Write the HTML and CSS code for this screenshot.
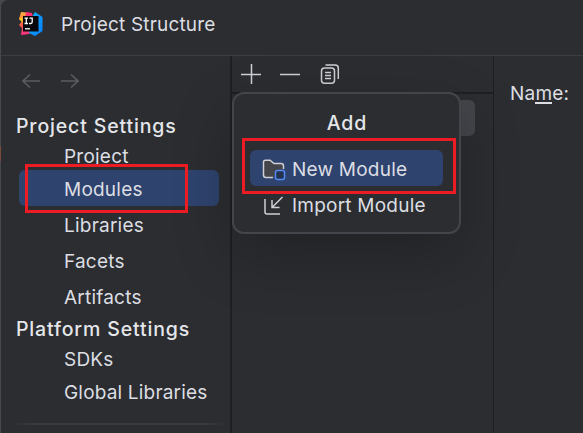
FILE: index.html
```
<!DOCTYPE html>
<html lang="en">
<head>
<meta charset="utf-8">
<title>Project Structure</title>
<link rel="stylesheet" href="styles.css">
</head>
<body>
<div class="window">
  <header class="titlebar">
    <svg class="logo" width="26" height="26" viewBox="0 0 26 26">
      <defs>
        <linearGradient id="warm" x1="0" y1="0" x2="0" y2="1"><stop offset="0" stop-color="#ffb340"/><stop offset=".45" stop-color="#ff6a3d"/><stop offset="1" stop-color="#fe2e86"/></linearGradient>
        <linearGradient id="cool" x1="0" y1="0" x2="1" y2="1"><stop offset="0" stop-color="#12b5f5"/><stop offset="1" stop-color="#087cfa"/></linearGradient>
      </defs>
      <path d="M3 1L12 2L14 20L11 23L3 24L4 17L1 14L4 10L1 8Z" fill="url(#warm)"/>
      <path d="M8 1L14 2L15 7L7 8Z" fill="#fe2e75"/>
      <path d="M17 1L24.500 6L24.500 20L17 25L11 22L14 6Z" fill="url(#cool)"/>
      <path d="M1 8L4 6L5 12Z" fill="#ffcc22"/>
      <rect x="5" y="5" width="15.500" height="15.500" fill="#08070b"/>
      <path d="M6.500 7.200H10M8.300 7.200V12.500M6.500 12.500H10M11.500 7.200H14.200V11Q14.200 12.500 12.800 12.500H11" fill="none" stroke="#fff" stroke-width="1.300"/>
      <path d="M7 17.800H12" stroke="#fff" stroke-width="1.300"/>
    </svg>
    <h1>Project Structure</h1>
  </header>
  <div class="content">
    <nav class="sidebar">
      <div class="history">
        <svg width="18" height="16" viewBox="0 0 18 16"><path d="M18 8H1M8 1.500L1 8L8 14.500"/></svg>
        <svg width="18" height="16" viewBox="0 0 18 16"><path d="M0 8H17M10 1.500L17 8L10 14.500"/></svg>
      </div>
      <h2>Project Settings</h2>
      <ul>
        <li class="short">Project</li>
        <li class="selected">Modules</li>
        <li>Libraries</li>
        <li>Facets</li>
        <li>Artifacts</li>
      </ul>
      <h2 class="platform">Platform Settings</h2>
      <ul>
        <li class="sdks">SDKs</li>
        <li class="global">Global Libraries</li>
      </ul>
      <div class="divider"></div>
      <div class="marker marker-modules"></div>
    </nav>
    <section class="modules">
      <div class="toolbar">
        <svg width="20" height="20" viewBox="0 0 20 20"><path d="M0 10.500H20M10.500 0V20"/></svg>
        <svg width="20" height="20" viewBox="0 0 20 20"><path d="M0 10.500H20"/></svg>
        <svg width="20" height="20" viewBox="0 0 20 20"><rect x="1.500" y="4" width="13" height="15.200" rx="3"/><path d="M5.500 1H15Q18.300 1 18.300 4V15M5 8.500H11M5 11.500H11M5 14.500H11"/></svg>
      </div>
      <div class="list"><div class="list-row"></div></div>
      <div class="popup">
        <h3>Add</h3>
        <div class="action active">
          <svg width="24" height="22" viewBox="0 0 24 22"><path d="M11 18.500H4Q1.500 18.500 1.500 16V3Q1.500 1.200 3.500 1.200H8L12 4.500H19Q21.500 4.500 21.500 7V10" class="folder"/><rect x="13.500" y="11.500" width="9" height="9" rx="2" class="badge"/></svg>
          <span>New Module</span>
        </div>
        <div class="action">
          <svg width="24" height="22" viewBox="0 0 24 22"><path d="M3 4V17Q3 19 5 19H18M20.500 2L10 12.500M10 5V12.500H17.500"/></svg>
          <span>Import Module</span>
        </div>
        <div class="marker marker-new"></div>
      </div>
    </section>
    <main class="details"><label>Na<span>m</span>e:</label></main>
  </div>
</div>
</body>
</html>
```
FILE: styles.css
```
* { box-sizing: border-box; }
body { margin: 0; background: linear-gradient(#46484c 146px, #7a4a3c 146px 161px, #46484c 161px); font-family: Inter, sans-serif; font-size: 19px; line-height: 24px; color: #dcdee3; overflow: hidden; white-space: nowrap; }
h1, h2, h3, ul { margin: 0; padding: 0; font-size: inherit; list-style: none; }
svg { display: block; flex: none; }
.window { margin-left: 1px; width: 582px; height: 433px; display: flex; flex-direction: column; background: #2b2d30; border-top-left-radius: 7px; }
.titlebar { height: 56px; flex: none; display: flex; align-items: center; padding: 0 0 8px 17px; border-bottom: 1px solid #3c3e42; }
h1 { margin-left: 17px; padding-top: 2px; font-weight: 400; letter-spacing: .18px; }
.content { flex: 1; display: flex; }
.sidebar { position: relative; width: 231px; border-right: 2px solid #1e1f22; }
.history { display: flex; gap: 21px; padding: 17px 0 0 21px; height: 58px; fill: none; stroke: #5a5c60; stroke-width: 1.600; }
h2 { height: 30px; padding: 0 0 0 15px; font-size: 19.500px; font-weight: 500; letter-spacing: .850px; color: #e4e6ea; }
li { height: 36px; line-height: 39px; padding-left: 45px; margin: 0 11px 0 18px; letter-spacing: .22px; }
.short { height: 26px; line-height: 25px; }
.selected { background: #2e436e; border-radius: 6px; }
.platform { height: 29px; padding-top: 3px; }
.sdks { height: 30px; line-height: 33px; }
.global { height: 36px; line-height: 40px; letter-spacing: .18px; }
.divider { height: 2px; margin: 14px 5px 0 12px; background: linear-gradient(90deg, transparent, #3a3c40 10%, #3a3c40 90%, transparent); }
.marker { position: absolute; border: 3px solid #ed1c24; }
.marker-modules { left: 24px; top: 108px; width: 163px; height: 49px; }
.modules { position: relative; width: 262px; display: flex; flex-direction: column; border-right: 1px solid #1e1f22; }
.toolbar { height: 38px; display: flex; gap: 19px; padding: 8px 0 0 9px; border-bottom: 2px solid #1e1f22; fill: none; stroke: #ced0d6; stroke-width: 1.500; }
.toolbar svg:last-child { margin-left: 1px; }
.list { flex: 1; padding: 6px 18px 0 11px; }
.list-row { height: 36px; background: #43454a; border-radius: 6px; }
.popup { position: absolute; left: 0; top: 36px; width: 229px; height: 142px; padding: 17px 16px 0 16px; border: 2px solid #43454a; border-radius: 12px; background: #2b2d30; box-shadow: 0 22px 60px #0000003d; }
h3 { height: 39px; padding: 0 0 0 1px; font-size: 19.500px; font-weight: 500; text-align: center; letter-spacing: .9px; color: #e4e6ea; }
.action { height: 36px; display: flex; align-items: center; gap: 6px; padding: 3px 0 0 12px; border-radius: 6px; letter-spacing: .22px; fill: none; stroke: #ced0d6; stroke-width: 1.500; }
.action span { stroke: none; }
.active { background: #2e436e; }
.folder { fill: #43454a; }
.badge { fill: #25324d; stroke: #548af7; }
.marker-new { left: 8px; top: 44px; width: 214px; height: 56px; }
.details { padding: 26px 0 0 16px; letter-spacing: .2px; }
.details span { display: inline-block; height: 22px; border-bottom: 2px solid #dcdee3; line-height: 24px; vertical-align: top; }
```
